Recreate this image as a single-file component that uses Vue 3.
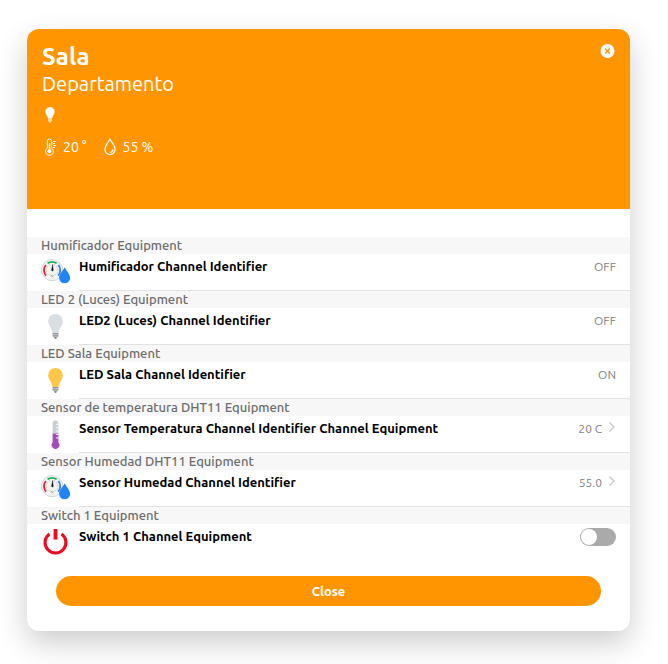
<script setup>
import { ref } from 'vue'

const switchOn = ref(false)

const groups = [
  { title: 'Humificador Equipment', name: 'Humificador Channel Identifier', icon: 'humidity', value: 'OFF' },
  { title: 'LED 2 (Luces) Equipment', name: 'LED2 (Luces) Channel Identifier', icon: 'bulb-off', value: 'OFF' },
  { title: 'LED Sala Equipment', name: 'LED Sala Channel Identifier', icon: 'bulb-on', value: 'ON' },
  { title: 'Sensor de temperatura DHT11 Equipment', name: 'Sensor Temperatura Channel Identifier Channel Equipment', icon: 'thermometer', value: '20 C', link: true },
  { title: 'Sensor Humedad DHT11 Equipment', name: 'Sensor Humedad Channel Identifier', icon: 'humidity', value: '55.0', link: true },
  { title: 'Switch 1 Equipment', name: 'Switch 1 Channel Equipment', icon: 'power', toggle: true },
]
</script>

<template>
  <main class="card">
    <header class="hero">
      <div class="hero-text">
        <h1>Sala</h1>
        <h2>Departamento</h2>
        <svg class="hero-bulb" width="16" height="18" viewBox="1 0 16 18" aria-hidden="true">
          <path d="M9 1a4.700 4.700 0 0 0-4.700 4.700c0 2.200 1.900 3.600 2.500 6.300h4.400c.6-2.700 2.500-4.100 2.500-6.300A4.700 4.700 0 0 0 9 1z" fill="#fff" />
          <path d="M7 12h4v2.500l-1.200 2H8.200L7 14.500z" fill="#ffdca8" />
        </svg>
        <div class="climate">
          <svg width="17" height="18" viewBox="1 0 17 18" fill="none" stroke="#fff" aria-hidden="true">
            <path d="M6.300 10.200V3.200a2.200 2.200 0 0 1 4.400 0v7a3.900 3.900 0 1 1-4.400 0z" stroke-width="1" />
            <path d="M8.500 5v7" stroke-width="1.400" />
            <circle cx="8.500" cy="13.300" r="2" fill="#fff" stroke="none" />
            <path d="M12 3.500h3M12 5.500h2M12 7.500h3M12 9.500h2" stroke-width="1" />
          </svg>
          <span class="temperature">20 °</span>
          <svg width="18" height="18" viewBox="0 0 18 18" fill="none" stroke="#fff" aria-hidden="true">
            <path d="M9 1.200C7.500 4 3.900 7.600 3.900 11.400a5.100 5.100 0 0 0 10.200 0C14.100 7.600 10.500 4 9 1.200z" stroke-width="1.200" />
            <path d="M12 11.300c0 1.700-1 2.800-2.600 3.100" stroke-width="1.100" />
          </svg>
          <span>55 %</span>
        </div>
      </div>
      <button class="dismiss" type="button" aria-label="Close panel">
        <svg width="16" height="16" viewBox="0 0 16 16" aria-hidden="true">
          <circle cx="7.500" cy="8" r="7" fill="#fff" />
          <path d="M5 5.500l5 5M10 5.500l-5 5" stroke="#ff9500" stroke-width="1.300" />
        </svg>
      </button>
    </header>

    <div class="list">
      <section v-for="group in groups" :key="group.title" class="group">
        <h3>{{ group.title }}</h3>
        <div class="row">
          <svg v-if="group.icon === 'humidity'" class="icon" viewBox="0 0 30 30" aria-hidden="true">
            <circle cx="11.500" cy="12.500" r="11" fill="#f3f3f3" stroke="#d2d2d2" stroke-width="1" />
            <g fill="none" stroke-width="1.900">
              <path d="M5.200 18.200A8.500 8.500 0 0 1 5 7.200" stroke="#e8202c" />
              <path d="M6.800 5.500a8.500 8.500 0 0 1 9.400 0" stroke="#18b04e" />
              <path d="M18 7.200a8.500 8.500 0 0 1-.2 11" stroke="#3a82dc" />
            </g>
            <circle cx="11.500" cy="12.500" r="6" fill="none" stroke="#9a9a9a" stroke-width="1" stroke-dasharray="0.800 1.900" />
            <path d="M11 12.500l1.100-5.500.5 5.500z" fill="#111" stroke="#111" stroke-width=".5" />
            <circle cx="11.800" cy="12.800" r="1" fill="#222" />
            <path d="M10 17.500l3 2.600M13 17.500l-2 2.600" stroke="#aaa" stroke-width=".8" />
            <path d="M24.500 9.500c-1.800 3.800-5.800 6.800-5.800 11a5.700 5.700 0 0 0 11.400 0c0-4.200-3.800-7.200-5.600-11z" fill="#1f84fb" />
          </svg>
          <svg v-else-if="group.icon === 'bulb-off' || group.icon === 'bulb-on'" class="icon" :class="group.icon" viewBox="0 0 30 30" aria-hidden="true">
            <path class="glass" d="M15 2a7.600 7.600 0 0 0-7.600 7.600c0 4.800 3.800 6.500 4.400 12h6.400c.6-5.500 4.400-7.200 4.400-12A7.600 7.600 0 0 0 15 2z" />
            <path d="M12 21.600h6v3.700l-1.600.8-.6 1.900h-1.600l-.6-1.900-1.600-.8z" fill="#8f9294" />
            <path d="M12 23.200h6M12 25h6" stroke="#d5d7d8" stroke-width=".7" />
          </svg>
          <svg v-else-if="group.icon === 'thermometer'" class="icon" viewBox="0 0 30 30" aria-hidden="true">
            <path d="M12 14V3.500a3 3 0 0 1 6 0V14z" fill="#c9d0d3" />
            <path d="M12 14h6v9.200a4 4 0 1 1-6 0z" fill="#a74bb8" />
            <path d="M15.500 4.500H18M15.500 8H18M15.500 11.500H18M15.500 15H18M15.500 18.500H18" stroke="#fff" stroke-width="1" />
          </svg>
          <svg v-else class="icon" viewBox="0 0 30 30" fill="none" stroke="#eb0c20" aria-hidden="true">
            <path d="M8.800 6.300a10.800 10.800 0 1 0 12.400 0" stroke-width="3.200" />
            <path d="M15 1v11" stroke-width="4" />
          </svg>

          <component :is="group.link ? 'a' : group.toggle ? 'label' : 'div'" class="content" :href="group.link ? '#history' : undefined">
            <strong>{{ group.name }}</strong>
            <input v-if="group.toggle" v-model="switchOn" class="switch" type="checkbox" />
            <span v-else class="value">{{ group.value }}</span>
            <svg v-if="group.link" class="chevron" width="8" height="12" viewBox="0 0 8 12" aria-hidden="true">
              <path d="M1.500 1.500L6 6l-4.500 4.500" fill="none" stroke="#c4c4c4" stroke-width="1.200" />
            </svg>
          </component>
        </div>
      </section>
    </div>

    <button class="close" type="button">Close</button>
  </main>
</template>

<style>
body {
  margin: 0;
  background: #fff;
}
</style>

<style scoped>
.card {
  box-sizing: border-box;
  margin: 29px 38px 33px 27px;
  padding-bottom: 25px;
  border-radius: 12px;
  background: #fff;
  box-shadow: 0 12px 30px rgba(0, 0, 0, 0.2);
  font-family: Ubuntu, "Noto Sans", "Open Sans", sans-serif;
  font-size: 13px;
  color: #000;
}
.hero {
  display: flex;
  justify-content: space-between;
  align-items: flex-start;
  box-sizing: border-box;
  min-height: 180px;
  padding: 14px 14px 0 15px;
  border-radius: 12px 12px 0 0;
  background: #ff9500;
  color: #fff;
}
h1, h2, h3 {
  margin: 0;
}
h1 {
  font-size: 24px;
  line-height: 28px;
}
h2 {
  font-size: 20px;
  line-height: 26px;
  font-weight: 400;
}
.hero-bulb {
  display: block;
  margin-top: 9px;
}
.climate {
  display: flex;
  align-items: center;
  gap: 4px;
  margin-top: 13px;
  font-size: 14px;
  line-height: 20px;
}
.temperature {
  margin-right: 10px;
}
button {
  border: 0;
  font: inherit;
  cursor: pointer;
}
.dismiss {
  display: flex;
  padding: 0;
  background: none;
}
.list {
  margin-top: 28px;
}
.group h3 {
  padding: 0 14px;
  background: #f7f7f7;
  font-size: 13px;
  line-height: 17px;
  font-weight: 500;
  color: #6c6c6c;
}
.row {
  display: flex;
  gap: 9px;
  height: 37px;
  padding-left: 14px;
}
.icon {
  flex: none;
  width: 29px;
  height: 29px;
  margin-top: 4px;
}
.bulb-off .glass {
  fill: #d8dfe3;
}
.bulb-on .glass {
  fill: #ffc74a;
}
.content {
  display: flex;
  flex: 1;
  align-items: flex-start;
  box-sizing: border-box;
  padding: 4px 14px 0 0;
  border-bottom: 1px solid #e2e2e2;
  line-height: 18px;
  color: inherit;
  text-decoration: none;
}
.group:last-child .content {
  border-bottom: 0;
}
.content strong {
  flex: 1;
  line-height: 16px;
  font-weight: 700;
}
.value {
  font-size: 12px;
  color: #808080;
}
.chevron {
  margin: 1px 0 0 6px;
}
.switch {
  appearance: none;
  display: flex;
  width: 36px;
  height: 18px;
  margin: 0;
  padding: 1px;
  box-sizing: border-box;
  border-radius: 9px;
  background: #aaa;
  cursor: pointer;
}
.switch::before {
  content: "";
  width: 16px;
  height: 16px;
  border-radius: 50%;
  background: #fff;
}
.switch:checked {
  justify-content: flex-end;
  background: #ff9500;
}
.close {
  display: block;
  width: calc(100% - 58px);
  height: 30px;
  margin: 15px auto 0;
  padding: 0;
  border-radius: 15px;
  background: #ff9500;
  color: #fff;
  font-size: 13px;
  line-height: 30px;
  font-weight: 700;
}
</style>
